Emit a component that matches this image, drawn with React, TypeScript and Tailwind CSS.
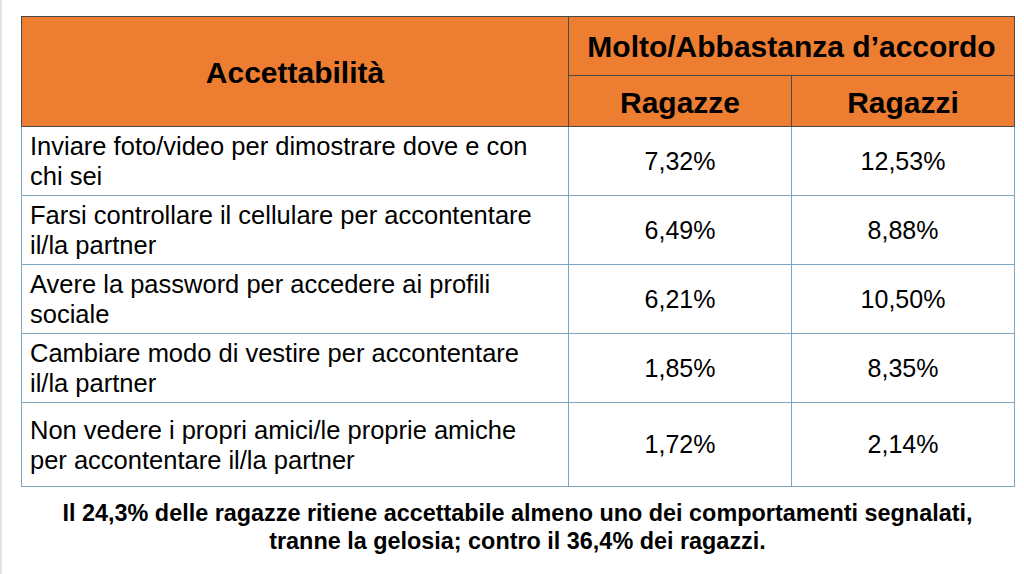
import React from 'react';

interface Row {
    label: string[];
    girls: string;
    boys: string;
    height: string;
}

const rows: Row[] = [
    { label: ['Inviare foto/video per dimostrare dove e con', 'chi sei'], girls: '7,32%', boys: '12,53%', height: 'h-[69px]' },
    { label: ['Farsi controllare il cellulare per accontentare', 'il/la partner'], girls: '6,49%', boys: '8,88%', height: 'h-[69px]' },
    { label: ['Avere la password per accedere ai profili', 'sociale'], girls: '6,21%', boys: '10,50%', height: 'h-[69px]' },
    { label: ['Cambiare modo di vestire per accontentare', 'il/la partner'], girls: '1,85%', boys: '8,35%', height: 'h-[69px]' },
    { label: ['Non vedere i propri amici/le proprie amiche', 'per accontentare il/la partner'], girls: '1,72%', boys: '2,14%', height: 'h-[84px]' },
];

const App: React.FC = () => {
    return (
        <div
            className="w-[1024px] h-[574px] bg-white text-black border-l-[2px] border-[#e2e2e2] pl-[19px] pt-[16px]"
            style={{ fontFamily: '"Liberation Sans", Arial, sans-serif' }}
        >
            <table className="table-fixed border-collapse w-[993px]">
                <colgroup>
                    <col className="w-[547px]" />
                    <col className="w-[223px]" />
                    <col className="w-[223px]" />
                </colgroup>
                <thead className="bg-[#ed7d31] font-bold text-[30px]">
                    <tr className="h-[59px]">
                        <th rowSpan={2} className="border border-[#4a4a4a] text-center font-bold pt-[2px]">Accettabilità</th>
                        <th colSpan={2} className="border border-[#4a4a4a] text-center font-bold pt-[1px]">Molto/Abbastanza d’accordo</th>
                    </tr>
                    <tr className="h-[51px]">
                        <th className="border border-[#4a4a4a] text-center font-bold pt-[3px]">Ragazze</th>
                        <th className="border border-[#4a4a4a] text-center font-bold pt-[3px]">Ragazzi</th>
                    </tr>
                </thead>
                <tbody>
                    {rows.map((row, i) => (
                        <tr key={i} className={row.height}>
                            <td className="border border-[#7ea6c3] pl-[8px] text-[25.5px] leading-[30px] align-middle">
                                <div className={i === 4 ? 'pt-[1px]' : 'pt-[0px]'}>
                                    {row.label[0]}
                                    <br />
                                    {row.label[1]}
                                </div>
                            </td>
                            <td className="border border-[#7ea6c3] text-center text-[25px] align-middle pt-[1px]">{row.girls}</td>
                            <td className="border border-[#7ea6c3] text-center text-[25px] align-middle pt-[1px]">{row.boys}</td>
                        </tr>
                    ))}
                </tbody>
            </table>
            <p className="w-[993px] text-center font-bold text-[23.4px] leading-[28px] pt-[12px]">
                Il 24,3% delle ragazze ritiene accettabile almeno uno dei comportamenti segnalati,
                <br />
                tranne la gelosia; contro il 36,4% dei ragazzi.
            </p>
        </div>
    );
};

export default App;
